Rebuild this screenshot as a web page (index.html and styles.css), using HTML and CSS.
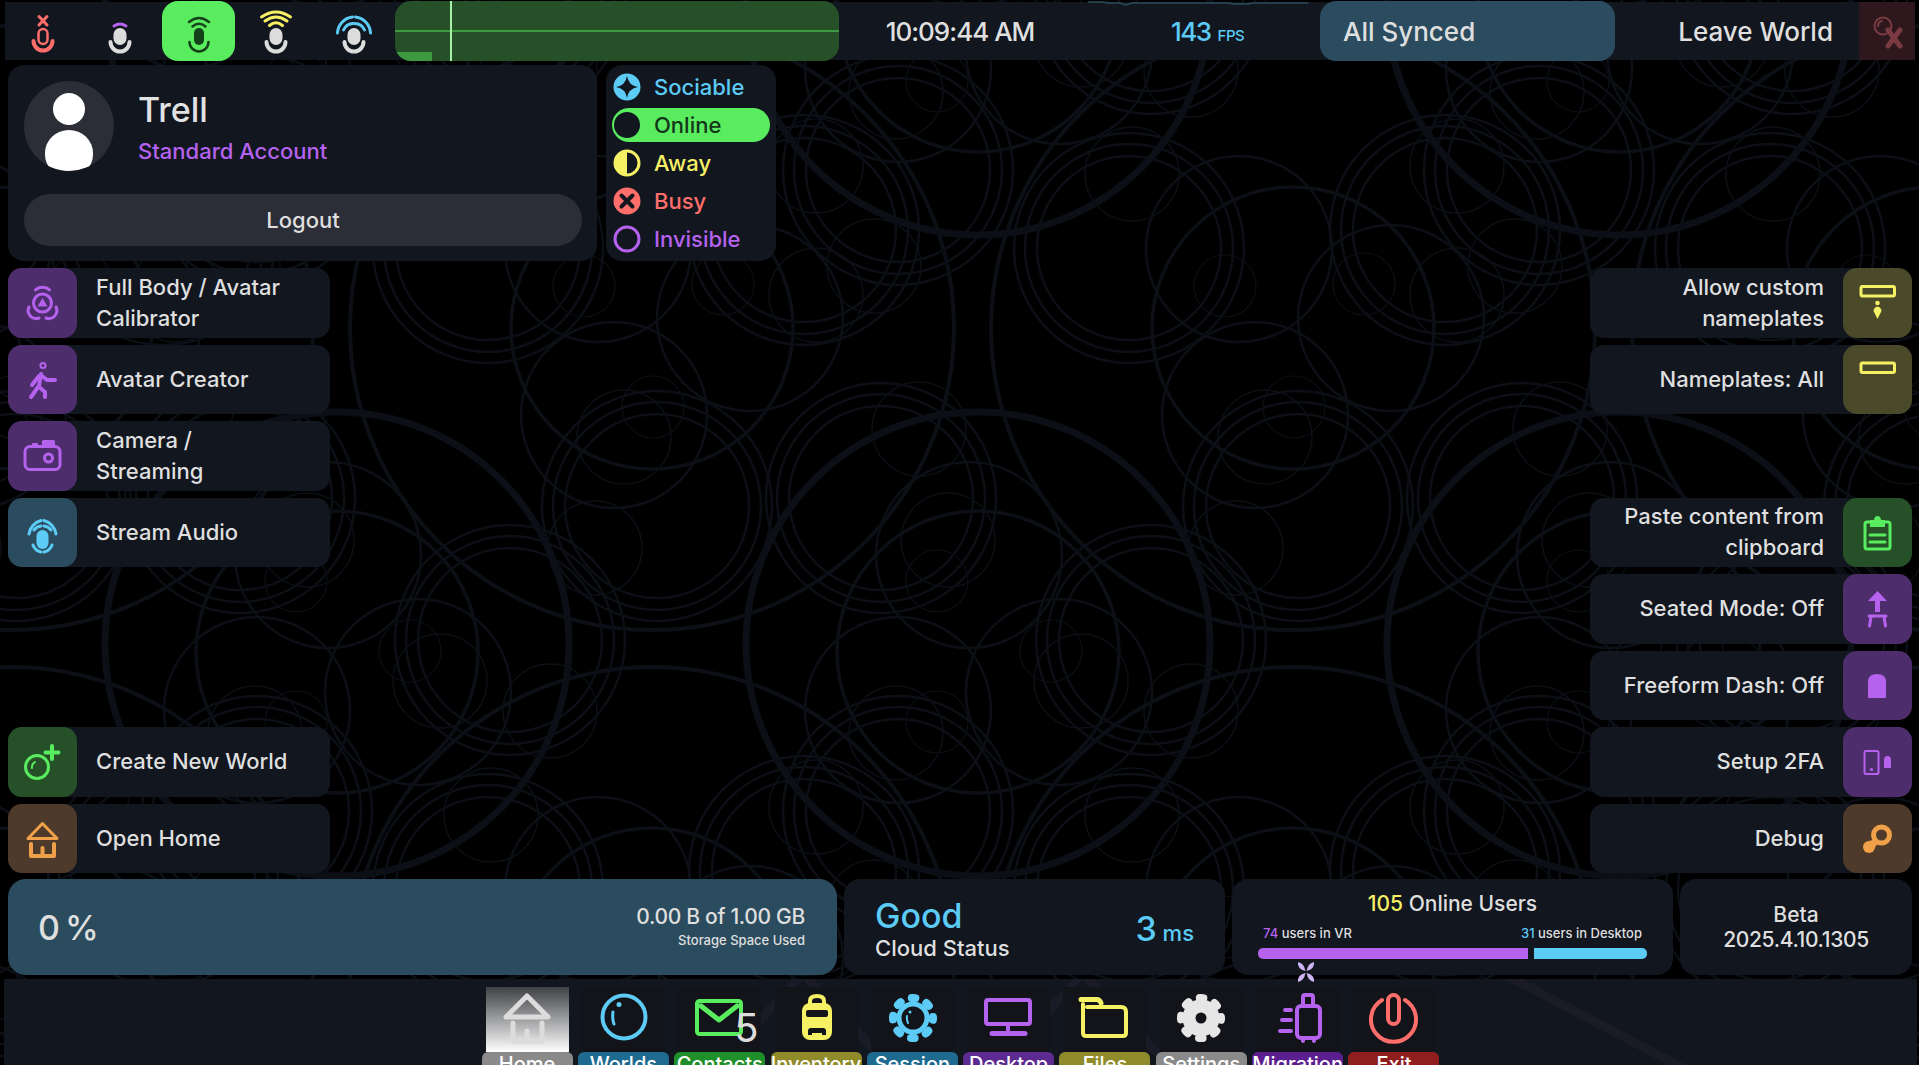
FILE: index.html
```html
<!DOCTYPE html>
<html lang="en">
<head>
<meta charset="utf-8">
<title>Dash</title>
<link rel="stylesheet" href="styles.css">
</head>
<body>
<svg class="backdrop" width="1919" height="1065" viewBox="0 0 1919 1065" aria-hidden="true">
  <defs>
    <g id="tile">
      <g class="ring-thick"><circle cx="337" cy="3" r="232"/></g>
      <g class="ring-wide"><circle cx="11" cy="328" r="302"/></g>
      <g class="ring-mid"><circle cx="11" cy="328" r="141"/><circle cx="337" cy="11" r="141"/></g>
      <g class="ring-triple">
        <circle cx="16" cy="506" r="115"/><circle cx="16" cy="506" r="104"/><circle cx="16" cy="506" r="92"/>
        <circle cx="240" cy="498" r="115"/><circle cx="240" cy="498" r="104"/><circle cx="240" cy="498" r="92"/>
        <circle cx="510" cy="-1" r="115"/><circle cx="510" cy="-1" r="104"/><circle cx="510" cy="-1" r="92"/>
        <circle cx="257" cy="170" r="115"/><circle cx="257" cy="170" r="104"/><circle cx="257" cy="170" r="92"/>
        <circle cx="488" cy="248" r="115"/><circle cx="488" cy="248" r="104"/><circle cx="488" cy="248" r="92"/>
        <circle cx="163" cy="230" r="115"/><circle cx="163" cy="230" r="104"/><circle cx="163" cy="230" r="92"/>
      </g>
      <g class="ring-triple">
        <circle cx="614" cy="415" r="93"/><circle cx="109" cy="318" r="93"/><circle cx="598" cy="249" r="93"/>
        <circle cx="328" cy="555" r="93"/><circle cx="257" cy="69" r="93"/><circle cx="418" cy="51" r="93"/>
      </g>
      <g class="ring-thin">
        <circle cx="624" cy="437" r="47"/><circle cx="595" cy="548" r="47"/><circle cx="278" cy="429" r="47"/>
        <circle cx="307" cy="540" r="47"/><circle cx="440" cy="40" r="47"/><circle cx="550" cy="70" r="47"/>
        <circle cx="255" cy="92" r="47"/><circle cx="491" cy="174" r="47"/><circle cx="175" cy="166" r="47"/>
        <circle cx="175" cy="295" r="47"/><circle cx="233" cy="266" r="47"/>
      </g>
      <g class="ring-hair">
        <circle cx="12" cy="407" r="31"/><circle cx="296" cy="581" r="31"/><circle cx="410" cy="10" r="31"/>
        <circle cx="296" cy="81" r="31"/><circle cx="584" cy="286" r="31"/><circle cx="82" cy="284" r="31"/>
      </g>
    </g>
    <g id="tile-row">
      <use href="#tile" x="-641"/><use href="#tile" x="0"/><use href="#tile" x="641"/><use href="#tile" x="1282"/><use href="#tile" x="1923"/>
    </g>
  </defs>
  <use href="#tile-row" y="-641"/><use href="#tile-row" y="0"/><use href="#tile-row" y="641"/><use href="#tile-row" y="1282"/>
</svg>

<svg class="top-trace" width="230" height="6" viewBox="0 0 230 6" aria-hidden="true">
  <path d="M0 2 H14 L20 3 H32 L38 5 L44 3 H140 L146 4 H160 L166 3 H220"/>
</svg>

<main class="screen">
  <header class="top-bar">
    <div class="voice-slot">
      <svg class="mic" viewBox="-20 1 40 58"><g class="s-red"><path class="w3" d="M-4 15.5 L4 24 M4 15.5 L-4 24"/><rect x="-4.5" y="28" width="9" height="15" rx="4.5"/><path class="w4" d="M-9.5 40 A9.5 9.5 0 0 0 9.5 40"/></g></svg>
    </div>
    <div class="voice-slot">
      <svg class="mic" viewBox="-20 1 40 58"><rect class="f-grey" x="-6.5" y="27" width="13" height="17" rx="6.5"/><path class="s-grey w4" d="M-9.5 41 A9.5 9.5 0 0 0 9.5 41"/><path class="s-purple w3" d="M-6 25 Q0 21 6 25"/></svg>
    </div>
    <div class="voice-slot voice-active">
      <svg class="mic" viewBox="-20 1 40 58"><rect class="f-dark" x="-5" y="27" width="10" height="17" rx="5"/><g class="s-dark"><path d="M-9.5 41 A9.5 9.5 0 0 0 9.5 41"/><path d="M-10 21 Q0 13 10 21"/><path d="M-6.5 25.5 Q0 20 6.5 25.5"/></g></svg>
    </div>
    <div class="voice-slot">
      <svg class="mic" viewBox="-20 1 40 58"><rect class="f-grey" x="-6.5" y="27" width="13" height="17" rx="6.5"/><path class="s-grey w4" d="M-9.5 41 A9.5 9.5 0 0 0 9.5 41"/><g class="s-yellow w3"><path d="M-14.5 16 Q0 6 14.5 16"/><path d="M-11 20 Q0 12 11 20"/><path d="M-6.5 24.5 Q0 19 6.5 24.5"/></g></svg>
    </div>
    <div class="voice-slot">
      <svg class="mic" viewBox="-20 1 40 58"><rect class="f-grey" x="-6.5" y="27" width="13" height="17" rx="6.5"/><path class="s-grey w4" d="M-9.5 41 A9.5 9.5 0 0 0 9.5 41"/><g class="s-cyan w3"><path d="M-16.5 32 A17 17 0 0 1 -1.5 16"/><path d="M16.5 32 A17 17 0 0 0 1.5 16"/><path d="M-10.5 29 A11 11 0 0 1 -1 22.5"/><path d="M10.5 29 A11 11 0 0 0 1 22.5"/></g></svg>
    </div>
    <div class="graph">
      <span class="graph-level"></span>
      <span class="graph-axis"></span>
      <span class="graph-cursor"></span>
    </div>
    <div class="clock">10:09:44 AM</div>
    <div class="fps"><strong>143</strong> <small>FPS</small></div>
    <div class="sync">All Synced</div>
    <div class="leave">Leave World</div>
    <div class="close-tile">
      <svg width="56" height="58" viewBox="0 0 56 58"><circle class="dim-ring" cx="24" cy="24" r="8.5"/><path class="dim-ring" d="M19 24 A5 5 0 0 1 23 19"/><path class="dim-x" d="M29 28 L41 44 M41 28 L29 44"/></svg>
    </div>
  </header>

  <section class="account-row">
    <div class="account panel">
      <div class="account-head">
        <div class="avatar"><span class="avatar-head"></span><span class="avatar-body"></span></div>
        <div class="account-id">
          <div class="account-name">Trell</div>
          <div class="account-kind">Standard Account</div>
        </div>
      </div>
      <button class="logout">Logout</button>
    </div>
    <ul class="status panel">
      <li class="status-item c-cyan">
        <svg class="status-icon" viewBox="0 0 28 28"><circle class="f-cyan" cx="14" cy="14" r="13.5"/><path class="f-panel" d="M14 3 Q15.5 12.5 25 14 Q15.5 15.5 14 25 Q12.5 15.5 3 14 Q12.5 12.5 14 3Z"/></svg>Sociable
      </li>
      <li class="status-item status-on">
        <svg class="status-icon" viewBox="0 0 28 28"><circle class="f-panel" cx="14" cy="14" r="13"/></svg>Online
      </li>
      <li class="status-item c-yellow">
        <svg class="status-icon" viewBox="0 0 28 28"><path class="f-yellow" d="M14 1 A13 13 0 0 0 14 27Z"/><circle class="s-yellow w3" cx="14" cy="14" r="12"/></svg>Away
      </li>
      <li class="status-item c-red">
        <svg class="status-icon" viewBox="0 0 28 28"><circle class="f-red" cx="14" cy="14" r="13.5"/><path class="s-panel w4" d="M8.5 8.5 L19.5 19.5 M19.5 8.5 L8.5 19.5"/></svg>Busy
      </li>
      <li class="status-item c-purple">
        <svg class="status-icon" viewBox="0 0 28 28"><circle class="s-purple w3" cx="14" cy="14" r="12"/></svg>Invisible
      </li>
    </ul>
  </section>

  <section class="actions">
    <div class="action-col">
      <div class="action">
        <span class="action-icon t-purple"><svg viewBox="0 0 69 69"><g class="s-purple w3"><path d="M27.5 22 A10 10 0 0 1 41.5 22"/><circle cx="34.5" cy="35" r="9"/><path d="M21 39 A8 8 0 0 0 31 50"/><path d="M48 39 A8 8 0 0 1 38 50"/></g><path class="f-purple" d="M34.5 30 L39.500 38.5 H29.500Z"/></svg></span>
        <span class="action-label">Full Body / Avatar<br>Calibrator</span>
      </div>
      <div class="action">
        <span class="action-icon t-purple"><svg viewBox="0 0 69 69"><circle class="s-purple w2" cx="35" cy="20.5" r="2.6"/><g class="s-purple w4"><path d="M33 29 L31 41"/><path d="M34 31 L39 35 H47"/><path d="M31 31 L24 40"/><path d="M31 42 L37 47 L37 52"/><path d="M30 42 L23 52"/></g></svg></span>
        <span class="action-label">Avatar Creator</span>
      </div>
      <div class="action">
        <span class="action-icon t-purple"><svg viewBox="0 0 69 69"><rect class="s-purple w3" x="17" y="25.5" width="35" height="23" rx="5"/><rect class="f-purple" x="34" y="19" width="13" height="6" rx="1.5"/><rect class="f-purple" x="24" y="22" width="6" height="4" rx="1"/><circle class="s-purple w3" cx="40.5" cy="37" r="4"/></svg></span>
        <span class="action-label">Camera /<br>Streaming</span>
      </div>
      <div class="action">
        <span class="action-icon t-cyan"><svg viewBox="0 0 69 69"><rect class="f-cyan" x="28.5" y="32" width="12" height="19" rx="6"/><g class="s-cyan w3"><path d="M21 36 A16 16 0 0 1 33 22.5"/><path d="M48 36 A16 16 0 0 0 36 22.5"/><path d="M26 32 A10 10 0 0 1 33 28"/><path d="M43 32 A10 10 0 0 0 36 28"/><path d="M25 47 A11 11 0 0 0 33 54"/><path d="M44 47 A11 11 0 0 1 36 54"/></g></svg></span>
        <span class="action-label">Stream Audio</span>
      </div>
      <div class="action-gap"></div>
      <div class="action">
        <span class="action-icon t-green"><svg viewBox="0 0 69 69"><circle class="s-green w3" cx="29" cy="40" r="11.5"/><path class="s-green w2" d="M24 41 A6 6 0 0 1 27 35"/><path class="s-green w4" d="M44 19 V32 M37.5 25.5 H50.5"/></svg></span>
        <span class="action-label">Create New World</span>
      </div>
      <div class="action">
        <span class="action-icon t-orange"><svg viewBox="0 0 69 69"><path class="s-orange w3" d="M34.5 19.5 L49 34.5 H20Z"/><path class="s-orange w4" d="M23 40 V52 H46 V40 M34.5 44 V52"/></svg></span>
        <span class="action-label">Open Home</span>
      </div>
    </div>

    <div class="action-col">
      <div class="action action-right">
        <span class="action-label">Allow custom<br>nameplates</span>
        <span class="action-icon t-yellow"><svg viewBox="0 0 69 69"><rect class="s-yellow w3" x="18" y="18.5" width="33.5" height="9.5" rx="1.5"/><circle class="f-yellow" cx="34.5" cy="35" r="2.3"/><path class="f-yellow" d="M34.5 51 L30.5 43 Q31 39 34.5 38.5 Q38 39 38.5 43Z"/></svg></span>
      </div>
      <div class="action action-right">
        <span class="action-label">Nameplates: All</span>
        <span class="action-icon t-yellow"><svg viewBox="0 0 69 69"><rect class="s-yellow w3" x="18" y="18" width="33.5" height="9.5" rx="1.5"/></svg></span>
      </div>
      <div class="action-gap-one"></div>
      <div class="action action-right">
        <span class="action-label">Paste content from<br>clipboard</span>
        <span class="action-icon t-green"><svg viewBox="0 0 69 69"><path class="s-green w3" d="M27 24 H24 Q22 24 22 26 V49 Q22 51 24 51 H45 Q47 51 47 49 V26 Q47 24 45 24 H42"/><path class="f-green" d="M27 22 H31 Q31.5 18 34.5 18 Q37.5 18 38 22 H42 V29 H27Z"/><path class="s-green w3" d="M27 37 H42 M27 44 H42"/></svg></span>
      </div>
      <div class="action action-right">
        <span class="action-label">Seated Mode: Off</span>
        <span class="action-icon t-purple"><svg viewBox="0 0 69 69"><path class="f-purple" d="M34.5 17 L44 27 H37 V38 H32 V27 H25Z"/><path class="s-purple w3" d="M26 42 H43 M28 43 L26.5 52 M41 43 L42.5 52"/></svg></span>
      </div>
      <div class="action action-right">
        <span class="action-label">Freeform Dash: Off</span>
        <span class="action-icon t-purple"><svg viewBox="0 0 69 69"><path class="f-purple" d="M26 47 Q25 47 25 46 V31 Q25 23 34 23 Q43 23 43 31 V46 Q43 47 42 47Z"/></svg></span>
      </div>
      <div class="action action-right">
        <span class="action-label">Setup 2FA</span>
        <span class="action-icon t-purple"><svg viewBox="0 0 69 69"><rect class="s-purple w2" x="21.5" y="24" width="14" height="23" rx="1.5"/><circle class="f-purple" cx="28.5" cy="42.5" r="1.6"/><path class="f-purple" d="M41 41 V33 Q41 29 44.5 29 Q48 29 48 33 V41Z"/></svg></span>
      </div>
      <div class="action action-right">
        <span class="action-label">Debug</span>
        <span class="action-icon t-orange"><svg viewBox="0 0 69 69"><circle class="s-orange w5" cx="38.5" cy="31" r="8"/><circle class="f-orange" cx="26" cy="43" r="6"/><path class="f-orange" d="M26 37 L33 35 L35 39 L31 45Z"/></svg></span>
      </div>
    </div>
  </section>

  <section class="stats">
    <div class="storage">
      <div class="storage-pct">0 %</div>
      <div class="storage-info">
        <div class="storage-amount">0.00 B of 1.00 GB</div>
        <div class="storage-note">Storage Space Used</div>
      </div>
    </div>
    <div class="cloud panel">
      <div>
        <div class="cloud-state">Good</div>
        <div class="cloud-label">Cloud Status</div>
      </div>
      <div class="cloud-ping"><strong>3</strong> ms</div>
    </div>
    <div class="users panel">
      <div class="users-total"><b>105</b> Online Users</div>
      <div class="users-split">
        <span><b class="c-purple">74</b> users in VR</span>
        <span><b class="c-cyan">31</b> users in Desktop</span>
      </div>
      <div class="users-bars"><span class="bar-vr"></span><span class="bar-desktop"></span></div>
      <svg class="grip" width="20" height="20" viewBox="0 0 20 20"><path d="M2 0 Q8 1 9.500 9 Q1 7 2 0Z M18 0 Q12 1 10.500 9 Q19 7 18 0Z M2 20 Q8 19 9.500 11 Q1 13 2 20Z M18 20 Q12 19 10.500 11 Q19 13 18 20Z"/></svg>
    </div>
    <div class="build panel">
      <div>Beta</div>
      <div class="build-number">2025.4.10.1305</div>
    </div>
  </section>

  <nav class="dock">
    <svg class="dock-marks" width="1913" height="86" viewBox="0 0 1913 86" aria-hidden="true">
      <path d="M700 100 L799 -5 L898 100 M980 100 L1079 -5 L1178 100 M1500 -5 L1700 100"/>
    </svg>
    <div class="dock-item">
      <div class="dock-tile dock-tile-on"><svg viewBox="0 0 83 65"><path class="s-soft w5" d="M41 9 L62 30 H20Z"/><path class="s-soft w5" d="M27 36 V54 H56 V36 M41 44 V54"/></svg></div>
      <div class="dock-label l-grey">Home</div>
    </div>
    <div class="dock-item">
      <div class="dock-tile"><svg viewBox="0 0 83 65"><circle class="s-cyan w4" cx="42" cy="30" r="21.5"/><path class="s-cyan w3" d="M31 25 Q30 32 32 37"/><circle class="f-cyan" cx="37" cy="17.5" r="2.5"/></svg></div>
      <div class="dock-label l-blue">Worlds</div>
    </div>
    <div class="dock-item">
      <div class="dock-tile"><svg viewBox="0 0 83 65"><rect class="s-green w4" x="19" y="14" width="44" height="33" rx="2.5"/><path class="s-green w5" d="M23 19 L41 33 L59 19"/></svg><span class="dock-count">5</span></div>
      <div class="dock-label l-green">Contacts</div>
    </div>
    <div class="dock-item">
      <div class="dock-tile"><svg viewBox="0 0 83 65"><path class="s-yellow w4" d="M35 17 V14 Q35 9 42 9 Q49 9 49 14 V17"/><rect class="f-yellow" x="27" y="16" width="30" height="37" rx="8"/><rect class="f-tile" x="31" y="23" width="22" height="7" rx="2"/><path class="f-tile" d="M33 48 V44 Q33 41 36 41 H48 Q51 41 51 44 V48 H47 V46 H37 V48Z"/></svg></div>
      <div class="dock-label l-olive">Inventory</div>
    </div>
    <div class="dock-item">
      <div class="dock-tile"><svg viewBox="0 0 83 65"><circle class="s-cyan w5" cx="42" cy="31" r="14"/><circle class="gear-teeth gear-cyan" cx="42" cy="31" r="20"/><path class="s-cyan w2" d="M36 29 Q35.500 33 37 36"/><circle class="f-cyan" cx="39" cy="25" r="1.5"/></svg></div>
      <div class="dock-label l-blue">Session</div>
    </div>
    <div class="dock-item">
      <div class="dock-tile"><svg viewBox="0 0 83 65"><rect class="s-purple w4" x="19" y="13" width="44" height="24" rx="2"/><path class="s-purple w4" d="M41 37 V45"/><path class="s-purple w5" d="M25 46.500 H58"/></svg></div>
      <div class="dock-label l-violet">Desktop</div>
    </div>
    <div class="dock-item">
      <div class="dock-tile"><svg viewBox="0 0 83 65"><path class="s-yellow w5" d="M18 12.500 H34 Q37 13 38 16"/><path class="s-yellow w4" d="M20 17 V46 Q20 49 23 49 H60 Q63 49 63 46 V25 Q63 20 58 20 H24"/></svg></div>
      <div class="dock-label l-olive">Files</div>
    </div>
    <div class="dock-item">
      <div class="dock-tile"><svg viewBox="0 0 83 65"><circle class="s-white w-gear" cx="41" cy="31" r="12"/><circle class="gear-teeth gear-white" cx="41" cy="31" r="20"/></svg></div>
      <div class="dock-label l-grey">Settings</div>
    </div>
    <div class="dock-item">
      <div class="dock-tile"><svg viewBox="0 0 83 65"><rect class="s-purple w4" x="41" y="19" width="23" height="32" rx="4"/><path class="s-purple w4" d="M47 18 V10 Q47 8 49 8 H55 Q57 8 57 10 V18 M47 52 V54 M58 52 V54"/><path class="s-purple w4" d="M29 23 H35 M26 33 H35 M24 44 H35"/></svg></div>
      <div class="dock-label l-indigo">Migration</div>
    </div>
    <div class="dock-item">
      <div class="dock-tile"><svg viewBox="0 0 83 65"><path class="s-red w4" d="M30 13 A22.500 22.500 0 1 0 53 13"/><rect class="s-red w4" x="36" y="8" width="11" height="29" rx="5.500"/></svg></div>
      <div class="dock-label l-red">Exit</div>
    </div>
  </nav>
</main>
</body>
</html>
```

FILE: styles.css
```css
* { box-sizing: border-box; }

html, body {
  margin: 0;
  height: 100%;
  background: #000;
  overflow: hidden;
}

body {
  position: relative;
  font-family: Inter, "Noto Sans", "Liberation Sans", sans-serif;
  font-weight: 500;
  color: #dfdfdf;
}

.backdrop { position: absolute; left: 0; top: 0; }
.backdrop circle { fill: none; stroke: #0c0f16; }
.ring-thick { stroke-width: 7; }
.ring-wide { stroke-width: 4; }
.ring-mid { stroke-width: 3.5; }
.ring-triple { stroke-width: 2.5; }
.ring-thin { stroke-width: 1.5; }
.ring-hair { stroke-width: 1.2; }

.top-trace { position: absolute; left: 1088px; top: 0; z-index: 2; }
.top-trace path { fill: none; stroke: #2b4c5e; stroke-width: 1.5; }

.screen {
  position: relative;
  height: 1065px;
  display: flex;
  flex-direction: column;
}

/* svg paint helpers */
svg { display: block; }
svg path, svg rect, svg circle { stroke-linecap: round; stroke-linejoin: round; }
[class*="s-"] { fill: none; }
.s-red { stroke: #ff6e6a; stroke-width: 2.5; }
.s-grey { stroke: #dcdcdc; }
.s-dark { stroke: #14401a; stroke-width: 2.5; fill: none; }
.s-purple { stroke: #b562ee; }
.s-yellow { stroke: #f5f064; }
.s-cyan { stroke: #5ccbf6; }
.s-green { stroke: #59ec5f; }
.s-orange { stroke: #f0a048; }
.s-panel { stroke: #11161f; }
.s-soft { stroke: #dcdcdc; }
.s-white { stroke: #e6e6e6; }
.w2 { stroke-width: 2; }
.w3 { stroke-width: 3; }
.w4 { stroke-width: 4; }
.w5 { stroke-width: 5; }
.w-gear { stroke-width: 13; }
.f-grey { fill: #dcdcdc; }
.f-dark { fill: #14401a; }
.f-purple { fill: #b562ee; }
.f-yellow { fill: #f5f064; }
.f-cyan { fill: #5ccbf6; }
.f-green { fill: #59ec5f; }
.f-orange { fill: #f0a048; }
.f-red { fill: #ff6e6a; }
.f-panel { fill: #11161f; }
.f-tile { fill: #13141a; }
.c-cyan { color: #5ccbf6; }
.c-yellow { color: #f5f064; }
.c-red { color: #ff6e6a; }
.c-purple { color: #b562ee; }

.gear-teeth {
  fill: none;
  stroke-width: 8;
  stroke-dasharray: 3.7 12.008;
  stroke-dashoffset: 1.85;
}
.gear-cyan { stroke: #5ccbf6; }
.gear-white { stroke: #e6e6e6; }

/* top bar */
.top-bar {
  margin: 2px 4px 0 5px;
  height: 58px;
  background: #11161f;
  display: flex;
  align-items: center;
  font-size: 26px;
}

.voice-slot {
  width: 78px;
  height: 60px;
  display: flex;
  align-items: center;
  justify-content: center;
  flex: none;
}
.voice-slot:nth-child(1) { width: 76px; }
.voice-slot:nth-child(3) { width: 73px; margin: 0 2px 0 3px; }
.mic { width: 40px; height: 58px; }
.voice-active { background: #59ec5f; border-radius: 16px; }

.graph {
  position: relative;
  margin-left: 2px;
  width: 444px;
  height: 60px;
  flex: none;
  background: #265128;
  border-radius: 16px;
  overflow: hidden;
}
.graph-level { position: absolute; left: 0; bottom: 0; width: 37px; height: 9px; background: #3d9a40; }
.graph-axis { position: absolute; left: 0; right: 0; top: 29px; height: 2px; background: #3d9a40; }
.graph-cursor { position: absolute; left: 55px; top: 0; bottom: 0; width: 2px; background: #a8f0aa; }

.clock { width: 242px; text-align: center; letter-spacing: -1px; flex: none; white-space: nowrap; }
.fps { width: 239px; padding-left: 90px; color: #5ccbf6; flex: none; white-space: nowrap; }
.fps strong { font-weight: 500; letter-spacing: -1.5px; }
.fps small { font-size: 15px; letter-spacing: -0.5px; }
.sync {
  width: 295px;
  height: 60px;
  flex: none;
  background: #2b4c5e;
  border-radius: 16px;
  display: flex;
  align-items: center;
  padding-left: 23px;
}
.leave { flex: 1; text-align: right; padding-right: 26px; white-space: nowrap; }
.close-tile { width: 56px; height: 58px; flex: none; background: #2e181d; }
.dim-ring { fill: none; stroke: #7a3a42; stroke-width: 2; }
.dim-x { fill: none; stroke: #7a3a42; stroke-width: 5; }

/* account row */
.panel { background: #11161f; border-radius: 16px; }

.account-row {
  margin-top: 5px;
  padding-left: 8px;
  display: flex;
  gap: 9px;
  height: 196px;
}

.account {
  width: 589px;
  padding: 16px 15px 15px 16px;
  display: flex;
  flex-direction: column;
  justify-content: space-between;
}
.account-head { display: flex; gap: 24px; }
.avatar {
  position: relative;
  width: 90px;
  height: 90px;
  border-radius: 50%;
  background: #2b2e37;
  overflow: hidden;
  flex: none;
}
.avatar-head { position: absolute; left: 29px; top: 12px; width: 32px; height: 32px; border-radius: 50%; background: #fff; }
.avatar-body { position: absolute; left: 21px; top: 49px; width: 48px; height: 46px; border-radius: 50% 50% 46% 46%; background: #fff; }
.account-id { padding-top: 7px; }
.account-name { font-size: 34px; line-height: 44px; color: #e2e2e2; }
.account-kind { font-size: 22px; line-height: 30px; margin-top: 4px; color: #b562ee; }
.logout {
  height: 52px;
  border: 0;
  border-radius: 26px;
  background: #2b2e37;
  color: #dfdfdf;
  font: inherit;
  font-size: 22px;
}

.status {
  width: 170px;
  margin: 0;
  padding: 5px 6px;
  list-style: none;
  display: flex;
  flex-direction: column;
  gap: 4px;
}
.status-item {
  height: 34px;
  display: flex;
  align-items: center;
  gap: 13px;
  padding-left: 1px;
  font-size: 22px;
  border-radius: 17px;
}
.status-on { background: #59ec5f; color: #14361a; }
.status-icon { width: 28px; height: 28px; flex: none; }

/* actions */
.actions {
  margin-top: 7px;
  padding: 0 7px 0 8px;
  display: flex;
  justify-content: space-between;
}
.action-col {
  width: 322px;
  display: grid;
  grid-template-rows: repeat(8, 69.5px);
  row-gap: 7px;
}
.action-gap { grid-row: span 2; }
.action-gap-one { grid-row: span 1; }
.action {
  display: flex;
  align-items: center;
  background: #11161f;
  border-radius: 14px;
  font-size: 22px;
  line-height: 31px;
}
.action-icon {
  width: 69px;
  height: 69.500px;
  flex: none;
  border-radius: 14px;
}
.action-label { flex: 1; padding-left: 19px; white-space: nowrap; }
.action-right .action-label { padding: 0 19px 0 0; text-align: right; }
.t-purple { background: #4e2d6c; }
.t-cyan { background: #2b4c5e; }
.t-yellow { background: #4a4a2a; }
.t-green { background: #265128; }
.t-orange { background: #4d3a2a; }

/* stats */
.stats {
  margin-top: 6px;
  padding-left: 8px;
  display: flex;
  gap: 7px;
  height: 96px;
}
.storage {
  width: 829px;
  background: #2b4c5e;
  border-radius: 18px;
  display: flex;
  align-items: center;
  justify-content: space-between;
  padding: 0 32px 0 30px;
}
.storage-pct { font-size: 34px; letter-spacing: -2px; }
.storage-info { text-align: right; }
.storage-amount { font-size: 21px; line-height: 26px; letter-spacing: -0.3px; }
.storage-note { font-size: 13px; line-height: 20px; }

.cloud {
  width: 381px;
  display: flex;
  align-items: center;
  justify-content: space-between;
  padding: 3px 31px 0 31px;
}
.cloud-state { font-size: 34px; line-height: 38px; color: #5ccbf6; }
.cloud-label { font-size: 22px; line-height: 26px; }
.cloud-ping { font-size: 22px; color: #5ccbf6; }
.cloud-ping strong { font-size: 34px; font-weight: 500; }

.users {
  position: relative;
  width: 441px;
  padding: 10px 26px 0;
  text-align: center;
}
.users-total { font-size: 21px; line-height: 30px; }
.users-total b { font-weight: 500; color: #f5f064; }
.users-split {
  display: flex;
  justify-content: space-between;
  font-size: 13px;
  line-height: 20px;
  margin: 4px 5px 0;
}
.users-split b { font-weight: 500; }
.users-bars { display: flex; gap: 6px; height: 11px; margin-top: 5px; }
.bar-vr { width: 270px; background: #b562ee; border-radius: 5px 0 0 5px; }
.bar-desktop { flex: 1; background: #5ccbf6; border-radius: 0 5px 5px 0; }
.grip { position: absolute; left: 64px; top: 83px; z-index: 3; }
.grip path { fill: #cdb4f2; }

.build {
  width: 232px;
  display: flex;
  flex-direction: column;
  align-items: center;
  justify-content: center;
  font-size: 21px;
  line-height: 25px;
}
.build-number { letter-spacing: -0.35px; }

/* dock */
.dock {
  position: relative;
  margin: 4px 2px 0 4px;
  height: 86px;
  padding: 8px 0 0;
  background: #11161f;
  overflow: hidden;
  display: flex;
  justify-content: center;
  gap: 5.330px;
}
.dock-marks { position: absolute; left: 0; top: 0; }
.dock-marks path { fill: none; stroke: #1a1b26; stroke-width: 9; }
.dock-item { position: relative; width: 91px; flex: none; }
.dock-tile { position: relative; width: 83px; height: 65px; margin: 0 auto; background: #13141a; }
.dock-tile-on { background: linear-gradient(#3e4044, #fff); }
.dock-count {
  position: absolute;
  left: 56px;
  top: 19px;
  font-size: 40px;
  line-height: 44px;
  font-weight: 400;
  color: #dcdcdc;
}
.dock-label {
  height: 30px;
  border-radius: 6px 6px 0 0;
  text-align: center;
  color: #fff;
  font-size: 20px;
  line-height: 24px;
  white-space: nowrap;
}
.l-grey { background: #8a8a8a; }
.l-blue { background: #1f6a8f; }
.l-green { background: #1f8f2a; }
.l-olive { background: #8f8a2a; }
.l-violet { background: #5c2a90; }
.l-indigo { background: #5c1f8f; }
.l-red { background: #8f1f1f; }
```
